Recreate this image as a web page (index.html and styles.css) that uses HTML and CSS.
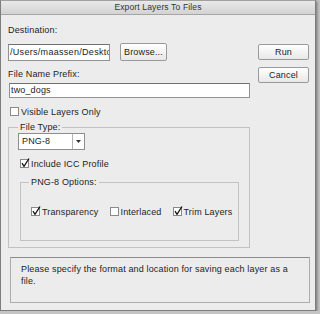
FILE: index.html
```html
<!DOCTYPE html>
<html lang="en">
<head>
    <meta charset="UTF-8">
    <meta name="viewport" content="width=device-width, initial-scale=1.0">
    <title>Export Layers To Files</title>
    <link rel="stylesheet" href="styles.css">
</head>
<body>
    <div class="window">
        <div class="titlebar">Export Layers To Files</div>

        <div class="content">
            <div class="main">
                <div class="label first">Destination:</div>
                <div class="dest-row">
                    <div class="field dest">/Users/maassen/Desktop</div>
                    <div class="button browse">Browse...</div>
                </div>

                <div class="label prefix-label">File Name Prefix:</div>
                <div class="field prefix">two_dogs</div>

                <div class="check visible">
                    <svg class="box" width="10" height="11" viewBox="0 0 10 11"><rect x="0.5" y="1.5" width="8" height="8" fill="#fff" stroke="#8a8a8a"/></svg>
                    Visible Layers Only
                </div>

                <fieldset class="group filetype">
                    <legend>File Type:</legend>
                    <div class="select">
                        <span class="value">PNG-8</span>
                        <span class="arrow"><svg width="5" height="3" viewBox="0 0 5 3"><path d="M0 0 L5 0 L2.5 3 Z" fill="#333"/></svg></span>
                    </div>

                    <div class="check icc">
                        <svg class="box" width="10" height="11" viewBox="0 0 10 11"><rect x="0.5" y="1.5" width="8" height="8" fill="#fff" stroke="#8a8a8a"/><path d="M2 5.2 L4 8.3 L9 0.5" fill="none" stroke="#111" stroke-width="1.3"/></svg>
                        Include ICC Profile
                    </div>

                    <fieldset class="group options">
                        <legend>PNG-8 Options:</legend>
                        <div class="option-row">
                            <div class="check">
                                <svg class="box" width="10" height="11" viewBox="0 0 10 11"><rect x="0.5" y="1.5" width="8" height="8" fill="#fff" stroke="#8a8a8a"/><path d="M2 5.2 L4 8.3 L9 0.5" fill="none" stroke="#111" stroke-width="1.3"/></svg>
                                Transparency
                            </div>
                            <div class="check">
                                <svg class="box" width="10" height="11" viewBox="0 0 10 11"><rect x="0.5" y="1.5" width="8" height="8" fill="#fff" stroke="#8a8a8a"/></svg>
                                Interlaced
                            </div>
                            <div class="check">
                                <svg class="box" width="10" height="11" viewBox="0 0 10 11"><rect x="0.5" y="1.5" width="8" height="8" fill="#fff" stroke="#8a8a8a"/><path d="M2 5.2 L4 8.3 L9 0.5" fill="none" stroke="#111" stroke-width="1.3"/></svg>
                                Trim Layers
                            </div>
                        </div>
                    </fieldset>
                </fieldset>
            </div>

            <div class="side">
                <div class="button run">Run</div>
                <div class="button cancel">Cancel</div>
            </div>
        </div>

        <div class="message">Please specify the format and location for saving each layer as a file.</div>
    </div>
</body>
</html>
```

FILE: styles.css
```css
body {
    margin: 0;
    background: #c4c4c4;
    font-family: 'Liberation Sans', Arial, sans-serif;
    font-size: 9px;
    letter-spacing: 0.15px;
    color: #1c1c1c;
}

.window {
    width: 314px;
    height: 309px;
    background: #ececec;
    border: 1px solid #7d7d7d;
    border-top-color: #a0a0a0;
    box-shadow: 1px 1px 3px rgba(0, 0, 0, 0.45);
}

.titlebar {
    height: 13px;
    line-height: 13px;
    text-align: center;
    font-size: 8.5px;
    color: #333;
    background: linear-gradient(#e9e9e9, #d3d3d3);
    border-bottom: 1px solid #a6a6a6;
}

.content {
    display: grid;
    grid-template-columns: 242px 51px;
    column-gap: 8px;
    padding-left: 7px;
}

.label {
    height: 11px;
    line-height: 11px;
}

.label.first {
    margin-top: 10px;
}

.dest-row {
    display: flex;
    align-items: flex-start;
    margin-top: 7px;
}

.field {
    box-sizing: border-box;
    background: #fff;
    border: 1px solid #929292;
    border-top-color: #707070;
    padding: 0 1px;
    white-space: nowrap;
    overflow: hidden;
}

.dest {
    width: 102px;
    height: 17px;
    line-height: 15px;
    margin-top: 1px;
    letter-spacing: 0.3px;
}

.button {
    box-sizing: border-box;
    border: 1px solid #9a9a9a;
    border-radius: 2px;
    background: linear-gradient(#ffffff, #f3f3f3 50%, #e8e8e8);
    text-align: center;
}

.browse {
    width: 47px;
    height: 18px;
    line-height: 16px;
    margin-left: 10px;
}

.prefix-label {
    margin-top: 8px;
}

.prefix {
    width: 241px;
    height: 15px;
    line-height: 13px;
    margin: 3px 0 0 1px;
}

.check {
    display: flex;
    align-items: center;
    height: 11px;
    white-space: nowrap;
}

.check .box {
    margin: 0 1px 0 2px;
    flex: none;
}

.visible {
    margin-top: 8px;
}

.group {
    margin: 0;
    min-width: 0;
    border: 1px solid #c2c2c2;
}

.group legend {
    padding: 0 2px;
    line-height: 10px;
}

.filetype {
    margin-top: 5px;
    padding: 0 10px 0 9px;
}

.select {
    display: flex;
    box-sizing: border-box;
    width: 67px;
    height: 17px;
    margin-top: 1px;
    background: #fff;
    border: 1px solid #8e8e8e;
    line-height: 15px;
}

.select .value {
    width: 50px;
    padding-left: 3px;
    border-right: 1px solid #b4b4b4;
}

.select .arrow {
    flex: 1;
    display: flex;
    justify-content: center;
    align-items: center;
}

.icc {
    margin-top: 8px;
}

.options {
    margin: 8px 0 6px 2px;
    padding: 0 0 23px 8px;
}

.option-row {
    display: flex;
    margin-top: 19px;
    height: 11px;
}

.option-row .check {
    margin-right: 9px;
}

.side .run {
    height: 16px;
    line-height: 14px;
    margin-top: 29px;
}

.side .cancel {
    height: 16px;
    line-height: 14px;
    margin-top: 7px;
}

.message {
    box-sizing: border-box;
    height: 46px;
    margin: 9px 5px 0 9px;
    padding: 5px 18px 5px 10px;
    line-height: 12px;
    border: 1px solid #acacac;
    border-top-color: #8c8c8c;
}
```
